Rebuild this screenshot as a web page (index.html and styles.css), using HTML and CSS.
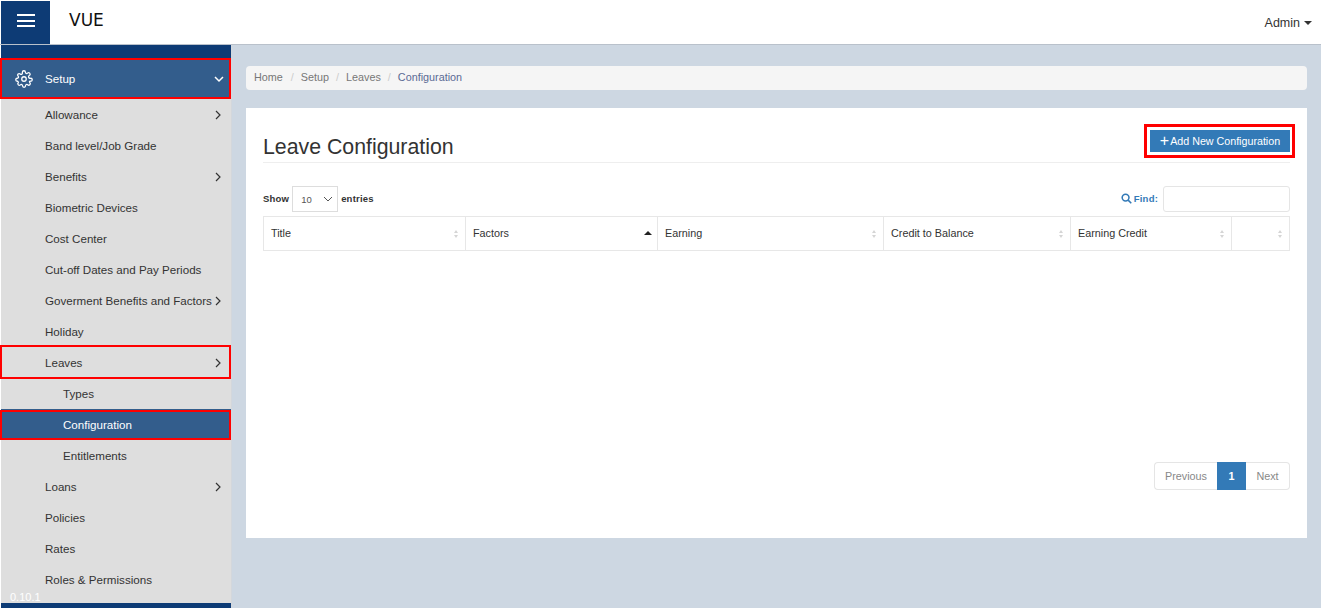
FILE: index.html
```html
<!DOCTYPE html>
<html lang="en">
<head>
    <meta charset="UTF-8">
    <meta name="viewport" content="width=device-width, initial-scale=1.0">
    <title>Leave Configuration</title>
    <link rel="stylesheet" href="styles.css">
</head>
<body>
    <header class="topbar">
        <button class="menu-btn" type="button" aria-label="Menu">
            <span></span><span></span><span></span>
        </button>
        <div class="logo">VUE</div>
        <div class="user">Admin <i class="caret"></i></div>
    </header>

    <div class="layout">
        <aside class="sidebar">
            <div class="side-top"></div>
            <a class="side-head marked-head">
                <svg class="gear" viewBox="0 0 24 24" width="18" height="18" fill="none" stroke="#fff" stroke-width="1.7" stroke-linecap="round" stroke-linejoin="round">
                    <circle cx="12" cy="12" r="3"></circle>
                    <path d="M19.4 15a1.65 1.65 0 0 0 .33 1.82l.06.06a2 2 0 0 1-2.83 2.83l-.06-.06a1.65 1.65 0 0 0-2.82 1.17V21a2 2 0 0 1-4 0v-.09a1.65 1.65 0 0 0-2.82-1.11l-.06.06a2 2 0 0 1-2.83-2.83l.06-.06A1.65 1.65 0 0 0 3.09 15H3a2 2 0 0 1 0-4h.09A1.65 1.65 0 0 0 4.2 8.18l-.06-.06a2 2 0 0 1 2.83-2.83l.06.06A1.65 1.65 0 0 0 9.85 4.2V3a2 2 0 0 1 4 0v.09a1.65 1.65 0 0 0 2.82 1.11l.06-.06a2 2 0 0 1 2.83 2.83l-.06.06A1.65 1.65 0 0 0 20.91 11H21a2 2 0 0 1 0 4h-.09a1.65 1.65 0 0 0-1.51 0z"></path>
                </svg>
                <span>Setup</span>
                <svg class="chev" viewBox="0 0 10 10" width="10" height="10" fill="none" stroke="#fff" stroke-width="1.5"><path d="M1 3l4 4 4-4"></path></svg>
            </a>
            <nav class="side-menu">
                <a class="item">Allowance <svg class="chev" viewBox="0 0 10 10" width="10" height="10" fill="none" stroke="#333" stroke-width="1.2"><path d="M3 1l4 4-4 4"></path></svg></a>
                <a class="item">Band level/Job Grade</a>
                <a class="item">Benefits <svg class="chev" viewBox="0 0 10 10" width="10" height="10" fill="none" stroke="#333" stroke-width="1.2"><path d="M3 1l4 4-4 4"></path></svg></a>
                <a class="item">Biometric Devices</a>
                <a class="item">Cost Center</a>
                <a class="item">Cut-off Dates and Pay Periods</a>
                <a class="item">Goverment Benefits and Factors <svg class="chev" viewBox="0 0 10 10" width="10" height="10" fill="none" stroke="#333" stroke-width="1.2"><path d="M3 1l4 4-4 4"></path></svg></a>
                <a class="item">Holiday</a>
                <a class="item marked">Leaves <svg class="chev" viewBox="0 0 10 10" width="10" height="10" fill="none" stroke="#333" stroke-width="1.2"><path d="M3 1l4 4-4 4"></path></svg></a>
                <a class="item sub">Types</a>
                <a class="item sub active marked">Configuration</a>
                <a class="item sub">Entitlements</a>
                <a class="item">Loans <svg class="chev" viewBox="0 0 10 10" width="10" height="10" fill="none" stroke="#333" stroke-width="1.2"><path d="M3 1l4 4-4 4"></path></svg></a>
                <a class="item">Policies</a>
                <a class="item">Rates</a>
                <a class="item">Roles &amp; Permissions</a>
            </nav>
            <div class="version">0.10.1</div>
            <div class="side-bottom"></div>
        </aside>

        <main class="content">
            <ol class="breadcrumb">
                <li>Home</li>
                <li>Setup</li>
                <li>Leaves</li>
                <li class="current">Configuration</li>
            </ol>

            <section class="card">
                <div class="card-head">
                    <h1>Leave Configuration</h1>
                    <div class="add-wrap">
                        <button class="btn-add" type="button"><b>+</b>Add New Configuration</button>
                    </div>
                </div>

                <div class="table-tools">
                    <label class="show">Show
                        <span class="select">10
                            <svg viewBox="0 0 10 10" width="10" height="10" fill="none" stroke="#555" stroke-width="1"><path d="M1 3l4 4 4-4"></path></svg>
                        </span>
                        entries</label>
                    <label class="find">
                        <svg viewBox="0 0 12 12" width="11" height="11" fill="none" stroke="#337ab7" stroke-width="1.7"><circle cx="5" cy="5" r="3.7"></circle><path d="M7.8 7.8L11.2 11.2"></path></svg>
                        Find:
                        <input type="text">
                    </label>
                </div>

                <table class="grid">
                    <thead>
                        <tr>
                            <th class="c1">Title<i class="sort"></i></th>
                            <th class="c2">Factors<i class="sort-up"></i></th>
                            <th class="c3">Earning<i class="sort"></i></th>
                            <th class="c4">Credit to Balance<i class="sort"></i></th>
                            <th class="c5">Earning Credit<i class="sort"></i></th>
                            <th class="c6"><i class="sort"></i></th>
                        </tr>
                    </thead>
                </table>

                <div class="pager">
                    <a class="prev">Previous</a>
                    <a class="on">1</a>
                    <a class="next">Next</a>
                </div>
            </section>
        </main>
    </div>
</body>
</html>
```

FILE: styles.css
```css
* {
    box-sizing: border-box;
}
html, body {
    height: 100%;
}
body {
    margin: 0;
    padding: 0;
    overflow: hidden;
    font-family: "Liberation Sans", Arial, sans-serif;
    font-size: 10.8px;
    color: #333;
    background-color: #fff;
    display: flex;
    flex-direction: column;
}

/* top bar */
.topbar {
    height: 45px;
    flex: none;
    display: flex;
    align-items: center;
    background-color: #fff;
    border-bottom: 1px solid #b9c1cb;
    padding: 1px 9px 0 1px;
}
.menu-btn {
    width: 49px;
    height: 43px;
    border: none;
    background-color: #0d3b75;
    display: flex;
    flex-direction: column;
    justify-content: center;
    align-items: center;
    gap: 3.5px;
    padding: 0 0 4px;
}
.menu-btn span {
    display: block;
    width: 18px;
    height: 2px;
    background-color: #fff;
}
.logo {
    margin-left: 19px;
    margin-top: -5px;
    font-family: "DejaVu Sans", sans-serif;
    font-size: 17px;
    color: #111;
}
.user {
    margin-left: auto;
    font-size: 12.5px;
    display: flex;
    align-items: center;
    gap: 4px;
}
.caret {
    width: 0;
    height: 0;
    border-left: 4px solid transparent;
    border-right: 4px solid transparent;
    border-top: 4px solid #333;
}

.layout {
    flex: 1;
    display: flex;
    min-height: 0;
    background-color: #cdd7e2;
}

/* side menu */
.sidebar {
    position: relative;
    width: 232px;
    flex: none;
    display: flex;
    flex-direction: column;
    font-size: 11.6px;
    background-color: #dedede;
    border-left: 1px solid #fff;
    border-right: 1px solid #d3d7dc;
}
.side-top {
    height: 13px;
    flex: none;
    background-color: #0d3b75;
}
.side-head {
    position: relative;
    height: 41px;
    flex: none;
    display: flex;
    align-items: center;
    color: #fff;
    background-color: #335d8c;
    padding-left: 14px;
}
.side-head span {
    margin-left: 12px;
}
.side-head .chev {
    margin-left: auto;
    margin-right: 7px;
}
.side-menu {
    flex: 1;
}
.item {
    position: relative;
    display: flex;
    align-items: center;
    height: 31px;
    padding-left: 44px;
    padding-right: 8px;
    color: #333;
    white-space: nowrap;
}
.item .chev {
    margin-left: auto;
}
.item.sub {
    padding-left: 62px;
}
.item.active {
    color: #fff;
    background-color: #335d8c;
}

/* red annotation boxes */
.marked::after,
.marked-head::after {
    content: "";
    position: absolute;
    border: 2px solid #f00;
    pointer-events: none;
}
.marked-head::after {
    inset: 0 0 0 -1px;
}
.marked::after {
    inset: -2px 0 -1px -1px;
}
.item.active.marked::after {
    inset: 1px 0 0 -1px;
}

.version {
    position: absolute;
    left: 9px;
    bottom: 5px;
    font-size: 11px;
    color: #fff;
}
.side-bottom {
    height: 5px;
    flex: none;
    background-color: #0d3b75;
}

/* main area */
.content {
    flex: 1;
    min-width: 0;
    padding: 21px 14px 0 14px;
}
.breadcrumb {
    list-style: none;
    display: flex;
    align-items: center;
    height: 24px;
    margin: 0 0 18px;
    padding: 0 8px 2px;
    background-color: #f5f5f5;
    border-radius: 4px;
    color: #777;
}
.breadcrumb li:first-child {
    margin-right: 1px;
}
.breadcrumb li + li::before {
    content: "/";
    color: #ccc;
    padding: 0 7px;
}
.breadcrumb .current {
    color: #5a6a94;
}
.card {
    background-color: #fff;
    height: 430px;
    padding: 0 17px 0 17px;
    display: flex;
    flex-direction: column;
}
.card-head {
    display: flex;
    justify-content: space-between;
    height: 55px;
    border-bottom: 1px solid #eee;
    padding-top: 24px;
}
.card-head h1 {
    margin: 0;
    font-size: 21.3px;
    font-weight: 400;
    line-height: 30px;
}
.add-wrap {
    border: 3px solid #f00;
    height: 34px;
    margin: -8px -5px 0 0;
    padding: 3px 2px 3px 3px;
}
.btn-add {
    display: block;
    height: 22px;
    width: 140px;
    padding: 0;
    border: none;
    background-color: #337ab7;
    color: #fff;
    font: inherit;
    font-size: 10.7px;
    white-space: nowrap;
}
.btn-add b {
    font-weight: 400;
    font-size: 16px;
    line-height: 12px;
    margin-right: 1px;
    vertical-align: -1px;
}
.table-tools {
    display: flex;
    justify-content: space-between;
    margin-top: 23px;
    height: 26px;
    font-size: 9.5px;
    font-weight: 700;
    letter-spacing: 0.2px;
}
.show,
.find {
    display: flex;
    align-items: center;
    padding-bottom: 2px;
}
.show {
    gap: 3px;
}
.select {
    display: flex;
    align-items: center;
    justify-content: space-between;
    width: 46px;
    height: 26px;
    margin-bottom: -2px;
    padding: 0 4px 0 8px;
    border: 1px solid #ddd;
    font-weight: 400;
    color: #555;
}
.find {
    gap: 2px;
    color: #337ab7;
}
.find input {
    width: 127px;
    height: 26px;
    margin-left: 3px;
    margin-bottom: -2px;
    border: 1px solid #e5e5e5;
    border-radius: 3px;
    background-color: #fff;
}
.grid {
    margin-top: 4px;
    width: 1026px;
    border-collapse: collapse;
    table-layout: fixed;
}
.grid th {
    position: relative;
    height: 34px;
    padding: 0 7px 2px;
    border: 1px solid #e7e7e7;
    text-align: left;
    font-weight: 400;
}
.c1 { width: 202px; }
.c2 { width: 192px; }
.c3 { width: 226px; }
.c4 { width: 187px; }
.c5 { width: 161px; }
.c6 { width: 58px; }
.sort,
.sort-up {
    position: absolute;
    right: 7px;
    top: 50%;
}
.sort::before,
.sort::after {
    content: "";
    position: absolute;
    right: 0;
    border-left: 2.5px solid transparent;
    border-right: 2.5px solid transparent;
}
.sort::before {
    top: -4px;
    border-bottom: 3px solid #d5d5d5;
}
.sort::after {
    top: 1px;
    border-top: 3px solid #d5d5d5;
}
.sort-up {
    right: 5px;
    margin-top: -3px;
    border-left: 4px solid transparent;
    border-right: 4px solid transparent;
    border-bottom: 4px solid #222;
}
.pager {
    display: flex;
    justify-content: flex-end;
    margin-top: 211px;
    height: 28px;
}
.pager a {
    display: flex;
    align-items: center;
    justify-content: center;
    border: 1px solid #e5e5e5;
    color: #888;
}
.pager .prev {
    width: 63px;
    border-right: none;
    border-radius: 4px 0 0 4px;
}
.pager .next {
    width: 44px;
    border-left: none;
    border-radius: 0 4px 4px 0;
}
.pager .on {
    width: 29px;
    background-color: #337ab7;
    border-color: #337ab7;
    color: #fff;
    font-weight: 700;
}
```
